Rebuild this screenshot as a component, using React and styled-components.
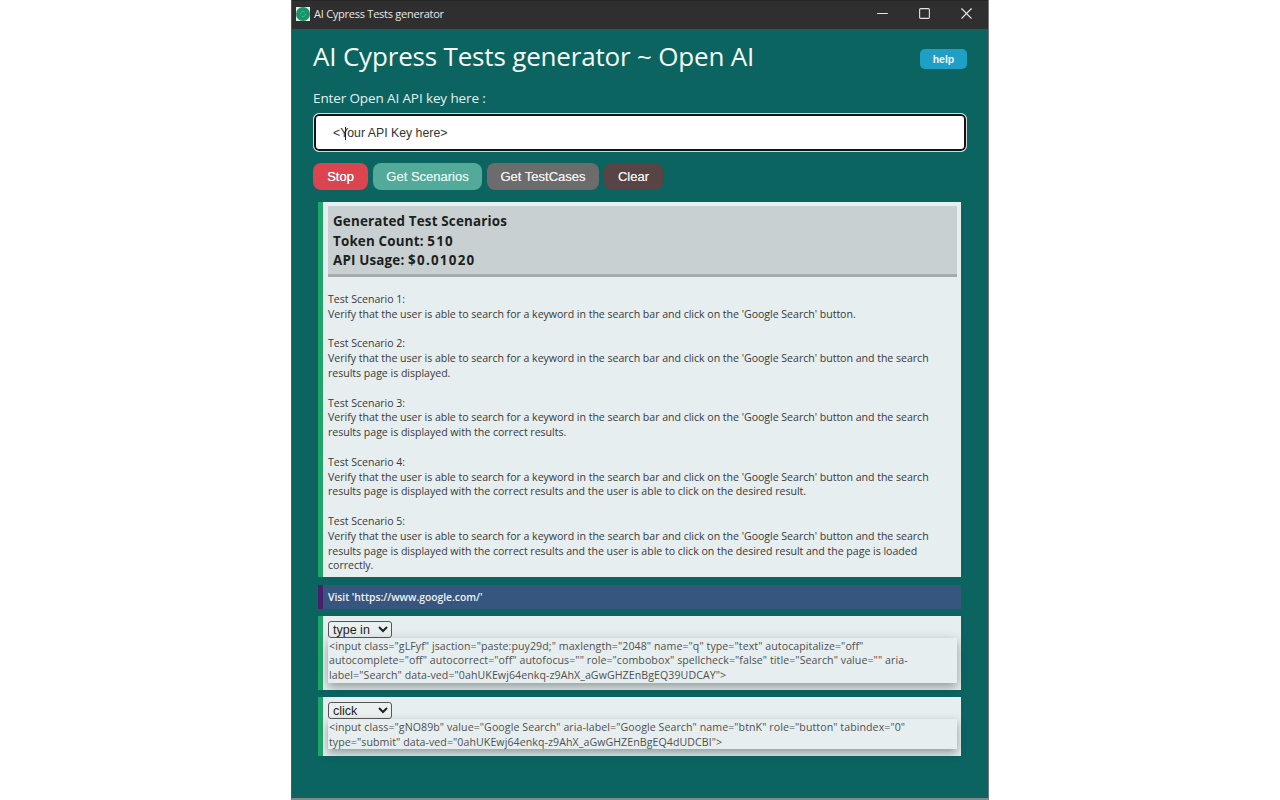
import React from "react";
import styled, { createGlobalStyle } from "styled-components";
import { Minus, Square, X } from "lucide-react";

const Global = createGlobalStyle`
  html, body { margin: 0; padding: 0; background: #fff; }
  body { font-family: "Open Sans", "Noto Sans", sans-serif; }
`;
const Page = styled.div`
  display: flex; justify-content: center; height: 800px; overflow: hidden;
`;
const Win = styled.div`
  width: 698px; height: 800px; box-sizing: border-box; display: flex; flex-direction: column;
  background: #0b6460; border-right: 1px solid #777; border-left: 1px solid #555; border-bottom: 2px solid #888;
`;
const TitleBar = styled.div`
  height: 29px; flex: none; background: #2f2f2f; display: flex; align-items: center; padding: 0 0 3px 3px; color: #e8e8e8;
  font-size: 11px; letter-spacing: -0.25px; border-top: 1px solid #262626; box-sizing: border-box;
`;
const AppIcon = styled.svg` width: 14px; height: 14px; flex: none; margin: 0 4px 0 1px; `;
const WinTitle = styled.span` flex: 1; `;
const WinButton = styled.span`
  width: 42px; height: 26px; display: flex; align-items: center; justify-content: center; color: #e4e4e4;
  margin-right: ${p => p.$end || 0}px;
`;
const Body = styled.main` flex: 1; padding: 0 21px 0 21px; display: flex; flex-direction: column; `;
const Header = styled.header`
  height: 55px; display: flex; align-items: center; justify-content: space-between;
`;
const Title = styled.h1`
  margin: 0 0 1px; font-size: 26px; font-weight: 400; color: #f4fbfa; letter-spacing: -0.18px; white-space: nowrap;
`;
const Help = styled.button`
  width: 47px; height: 20px; border: 0; border-radius: 5px; background: #1f9fc6; color: #f4f4f4; padding: 0;
  font: 700 10.5px "Liberation Sans", sans-serif; margin-top: 5px;
`;
const Label = styled.label`
  display: block; color: #e6f1f0; font-size: 13.5px; line-height: 18px; margin-top: 5px; letter-spacing: -0.12px;
`;
const KeyField = styled.div` position: relative; margin-top: 6px; `;
const KeyInput = styled.input`
  display: block; box-sizing: border-box; width: 654px; height: 39px; padding: 0 19px;
  background: #fff; border: 1px solid #d8d8d8; box-shadow: inset 0 0 0 2px #141414; outline: 0; border-radius: 6px; color: #333;
  font: 12.3px "Liberation Sans", sans-serif;
  &::placeholder { color: #333; opacity: 1; }
`;
const Caret = styled.span`
  position: absolute; left: 32px; top: 14px; width: 1px; height: 13px; background: #222;
`;
const Actions = styled.div` display: flex; gap: 5px; margin-top: 11px; `;
const Action = styled.button`
  height: 27px; width: ${p => p.$w}px; padding: 0; border: 0; border-radius: 8px; background: ${p => p.$bg}; color: ${p => p.$fg};
  font: 13px "Liberation Sans", sans-serif; flex: none; text-shadow: 0 0 .6px currentColor;
`;
const Stack = styled.div` display: flex; flex-direction: column; gap: 7px; margin: 12px 6px 0 5px; `;
const Panel = styled.section`
  border-left: 5px solid ${p => p.$accent || "#1fa56a"}; background: ${p => p.$bg || "#e6eeef"}; padding: ${p => p.$pad || "0 4px 0 5px"};
  box-sizing: border-box;
  font-size: 10.6px; line-height: 14.75px; color: #3a3a3a; letter-spacing: -0.03px;
`;
const ResultPanel = styled(Panel)` margin-bottom: 1px; `;
const ResultHead = styled.div`
  background: #c8d0d1; border-bottom: 3px solid #a3abac; padding: 6px 5px 3px; margin-top: 4px;
  color: #1c1f20; font-size: 13.4px; font-weight: 700; line-height: 19.5px; letter-spacing: 0.17px;
`;
const Num = styled.span` letter-spacing: 1.25px; `;
const Scenarios = styled.div` padding: 15.6px 20px 3.4px 0; white-space: pre-line; line-height: 14.8px; `;
const Visit = styled.div`
  box-sizing: border-box; height: 24px; display: flex; align-items: center; color: #eef2f6; font-weight: 600; font-size: 10.35px; padding: 1px 0 0;
`;
const Select = styled.select`
  display: block; width: 64px; height: 17px; padding: 0; border: 1px solid #555; border-radius: 3px; background: #eaf0f0;
  color: #222; font: 12.5px "Liberation Sans", sans-serif;
`;
const Code = styled.div`
  padding: 1px 0 0 1px; background: #e6eeef; box-shadow: 0 4px 10px rgba(40,50,50,.45); color: #505050; letter-spacing: 0.078px;
`;

const scenarioText = `Test Scenario 1:
Verify that the user is able to search for a keyword in the search bar and click on the 'Google Search' button.

Test Scenario 2:
Verify that the user is able to search for a keyword in the search bar and click on the 'Google Search' button and the search
results page is displayed.

Test Scenario 3:
Verify that the user is able to search for a keyword in the search bar and click on the 'Google Search' button and the search
results page is displayed with the correct results.

Test Scenario 4:
Verify that the user is able to search for a keyword in the search bar and click on the 'Google Search' button and the search
results page is displayed with the correct results and the user is able to click on the desired result.

Test Scenario 5:
Verify that the user is able to search for a keyword in the search bar and click on the 'Google Search' button and the search
results page is displayed with the correct results and the user is able to click on the desired result and the page is loaded
correctly.`;

export default function App() {
  return (
    <Page>
      <Global />
      <Win>
        <TitleBar>
          <AppIcon viewBox="0 0 14 14">
            <rect width="14" height="14" fill="#e8efe9" />
            <circle cx="7" cy="7" r="7" fill="#17956a" />
            <path d="M4.5 7a2.5 2.5 0 0 1 4-2M9.5 7a2.5 2.5 0 0 1-4 2" stroke="#4fb596" fill="none" strokeWidth=".9" />
          </AppIcon>
          <WinTitle>AI Cypress Tests generator</WinTitle>
          <WinButton><Minus size={17} strokeWidth={1.1} absoluteStrokeWidth /></WinButton>
          <WinButton><Square size={13} strokeWidth={1.1} absoluteStrokeWidth /></WinButton>
          <WinButton $end={1}><X size={19} strokeWidth={1.1} absoluteStrokeWidth /></WinButton>
        </TitleBar>
        <Body>
          <Header>
            <Title>AI Cypress Tests generator ~ Open AI</Title>
            <Help>help</Help>
          </Header>
          <Label>Enter Open AI API key here :</Label>
          <KeyField>
            <KeyInput placeholder="<Your API Key here>" />
            <Caret />
          </KeyField>
          <Actions>
            <Action $w={55} $bg="#dc4450" $fg="#fff">Stop</Action>
            <Action $w={109} $bg="#52ab99" $fg="#e3f1ee">Get Scenarios</Action>
            <Action $w={112} $bg="#6c6c6c" $fg="#eee">Get TestCases</Action>
            <Action $w={59} $bg="#584444" $fg="#eee">Clear</Action>
          </Actions>
          <Stack>
            <ResultPanel>
              <ResultHead>Generated Test Scenarios<br />Token Count: <Num>510</Num><br />API Usage: <Num>$0.01020</Num></ResultHead>
              <Scenarios>{scenarioText}</Scenarios>
            </ResultPanel>
            <Panel $accent="#44216a" $bg="#37567f">
              <Visit>Visit 'https://www.google.com/'</Visit>
            </Panel>
            <Panel $pad="5px 4px 7px 5px">
              <Select defaultValue="type in"><option>type in</option><option>click</option></Select>
              <Code>&lt;input class="gLFyf" jsaction="paste:puy29d;" maxlength="2048" name="q" type="text" autocapitalize="off"<br />autocomplete="off" autocorrect="off" autofocus="" role="combobox" spellcheck="false" title="Search" value="" aria-<br />label="Search" data-ved="0ahUKEwj64enkq-z9AhX_aGwGHZEnBgEQ39UDCAY"&gt;</Code>
            </Panel>
            <Panel $pad="5px 4px 7px 5px">
              <Select defaultValue="click"><option>type in</option><option>click</option></Select>
              <Code>&lt;input class="gNO89b" value="Google Search" aria-label="Google Search" name="btnK" role="button" tabindex="0"<br />type="submit" data-ved="0ahUKEwj64enkq-z9AhX_aGwGHZEnBgEQ4dUDCBI"&gt;</Code>
            </Panel>
          </Stack>
        </Body>
      </Win>
    </Page>
  );
}
